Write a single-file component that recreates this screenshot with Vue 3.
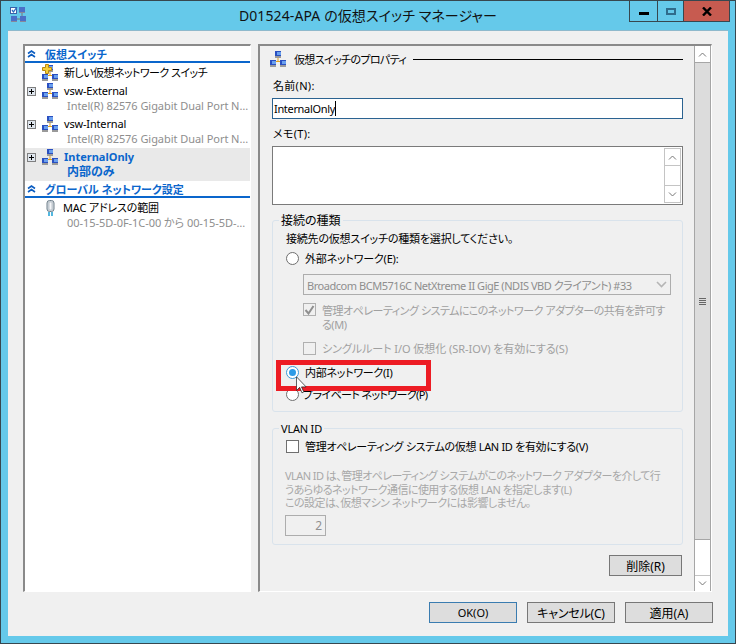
<script setup>
const items = [
  { name: 'vsw-External', sub: 'Intel(R) 82576 Gigabit Dual Port N…' },
  { name: 'vsw-Internal', sub: 'Intel(R) 82576 Gigabit Dual Port N…' },
  { name: 'InternalOnly', sub: '内部のみ', selected: true }
]
</script>

<template>
  <div class="win">
    <svg width="0" height="0" class="defs">
      <symbol id="sw" viewBox="0 0 16 16">
        <path d="M8 6v4M3 10.5h10M3 10v2M13 10v2" stroke="#e0a020" fill="none" />
        <rect x="5" y="0" width="6" height="5" fill="#2a4fc0" />
        <rect x="7" y="1" width="4" height="3" fill="#6aa0ee" />
        <rect x="5" y="5" width="6" height="2" fill="#9a9a9a" />
        <rect x="0" y="9" width="6" height="5" fill="#2a4fc0" />
        <rect x="2" y="10" width="4" height="3" fill="#6aa0ee" />
        <rect x="0" y="14" width="6" height="2" fill="#9a9a9a" />
        <rect x="10" y="9" width="6" height="5" fill="#2a4fc0" />
        <rect x="12" y="10" width="4" height="3" fill="#6aa0ee" />
        <rect x="10" y="14" width="6" height="2" fill="#9a9a9a" />
      </symbol>
      <symbol id="chev" viewBox="0 0 9 8">
        <path d="M1 3.5 4.5 1 8 3.5M1 7 4.5 4.5 8 7" stroke="#0a5cc0" stroke-width="1.6" fill="none" />
      </symbol>
      <symbol id="plus" viewBox="0 0 9 9">
        <rect x="0.5" y="0.5" width="8" height="8" fill="#dfe6ee" stroke="#7f7f7f" />
        <path d="M2 4.5h5M4.5 2v5" stroke="#000" />
      </symbol>
    </svg>

    <header class="title">
      <svg class="title-icon" width="16" height="16" viewBox="0 0 16 16">
        <rect x="0.5" y="0.5" width="6" height="6" fill="#fff" stroke="#3a62a8" />
        <path d="M2 3l1.5 2L7 0" stroke="#2a6cc0" stroke-width="1.3" fill="none" />
        <path d="M12 6v5M3 12h10" stroke="#777" fill="none" />
        <rect x="9" y="0" width="6" height="5" fill="#4a70c8" />
        <rect x="1" y="9" width="6" height="5" fill="#4a70c8" />
        <rect x="10" y="9" width="6" height="5" fill="#4a70c8" />
        <rect x="9" y="5" width="6" height="1" fill="#889" />
        <rect x="1" y="14" width="6" height="1" fill="#889" />
        <rect x="10" y="14" width="6" height="1" fill="#889" />
      </svg>
      <div class="title-text">D01524-APA の仮想スイッチ マネージャー</div>
      <div class="controls">
        <div class="ctl min"><i></i></div>
        <div class="ctl max"><i></i></div>
        <div class="ctl close">
          <svg width="10" height="9" viewBox="0 0 10 9"><path d="M1 0.5 9 8.5M9 0.5 1 8.5" stroke="#000" stroke-width="2.4" /></svg>
        </div>
      </div>
    </header>

    <main class="client">
      <div class="panels">
        <aside class="left">
          <div class="sec">
            <svg class="chev" width="9" height="8"><use href="#chev" /></svg>
            <span>仮想スイッチ</span>
          </div>
          <div class="row new-row">
            <span class="exp"></span>
            <span class="ico-wrap">
              <svg width="16" height="16"><use href="#sw" /></svg>
              <svg class="new-plus" width="10" height="10" viewBox="0 0 10 10"><path d="M3.5 0.5h3v3h3v3h-3v3h-3v-3h-3v-3h3z" fill="#f5cf3a" stroke="#b98a10" /></svg>
            </span>
            <span class="main tight">新しい仮想ネットワーク スイッチ</span>
          </div>
          <div v-for="it in items" :key="it.name" class="item" :class="{ selected: it.selected }">
            <div class="row">
              <span class="exp"><svg width="9" height="9"><use href="#plus" /></svg></span>
              <svg class="ico" width="16" height="16"><use href="#sw" /></svg>
              <span class="main">{{ it.name }}</span>
            </div>
            <div class="sub">{{ it.sub }}</div>
          </div>
          <div class="sec">
            <svg class="chev" width="9" height="8"><use href="#chev" /></svg>
            <span>グローバル ネットワーク設定</span>
          </div>
          <div class="item mac">
            <div class="row">
              <span class="exp mac-exp"></span>
              <svg class="ico mac-ico" width="9" height="16" viewBox="0 0 9 16">
                <rect x="1" y="0.5" width="7" height="11" rx="2.5" fill="#d7dde2" stroke="#6f7f8a" />
                <rect x="3" y="2" width="3" height="8" fill="#f4f6f8" stroke="#9aa6ae" stroke-width="0.6" />
                <path d="M3 12v4M6 12v4" stroke="#2aa6d8" stroke-width="1.6" />
              </svg>
              <span class="main">MAC アドレスの範囲</span>
            </div>
            <div class="sub">00-15-5D-0F-1C-00 から 00-15-5D-…</div>
          </div>
        </aside>

        <section class="right">
          <div class="content">
            <div class="head">
              <svg width="16" height="16"><use href="#sw" /></svg>
              <span>仮想スイッチのプロパティ</span>
              <i></i>
            </div>
            <div class="lbl first">名前(N):</div>
            <div class="input"><span>InternalOnly</span><b></b></div>
            <div class="lbl">メモ(T):</div>
            <div class="memo">
              <div class="memo-bar">
                <div class="mb">
                  <svg width="9" height="5" viewBox="0 0 9 5"><path d="M1 4.5 4.5 1 8 4.5" stroke="#777" fill="none" /></svg>
                </div>
                <div class="mb-track"></div>
                <div class="mb">
                  <svg width="9" height="5" viewBox="0 0 9 5"><path d="M1 .5 4.5 4 8 .5" stroke="#777" fill="none" /></svg>
                </div>
              </div>
            </div>

            <fieldset class="group conn">
              <legend>接続の種類</legend>
              <div class="line desc">接続先の仮想スイッチの種類を選択してください。</div>
              <div class="line ext"><span class="radio"></span>外部ネットワーク(E):</div>
              <div class="select">
                <span>Broadcom BCM5716C NetXtreme II GigE (NDIS VBD クライアント) #33</span>
                <svg width="11" height="7" viewBox="0 0 11 7"><path d="M1 1 5.5 5.5 10 1" stroke="#b5b5b5" stroke-width="1.6" fill="none" /></svg>
              </div>
              <div class="chk-row share">
                <span class="check off">
                  <svg width="11" height="10" viewBox="0 0 11 10"><path d="M1.5 5 4.5 8.5 9.5 1" stroke="#8f8f8f" stroke-width="2" fill="none" /></svg>
                </span>
                <span class="dim wrap">管理オペレーティング システムにこのネットワーク アダプターの共有を許可す<br />る(M)</span>
              </div>
              <div class="chk-row sriov">
                <span class="check off"></span>
                <span class="dim">シングルルート I/O 仮想化 (SR-IOV) を有効にする(S)</span>
              </div>
              <div class="line int"><span class="radio on"><i></i></span>内部ネットワーク(I)</div>
              <div class="line priv"><span class="radio"></span><span class="priv-t">プライベート ネットワーク(P)</span></div>
            </fieldset>

            <fieldset class="group vlan">
              <legend>VLAN ID</legend>
              <div class="line vlan-opt"><span class="check"></span>管理オペレーティング システムの仮想 LAN ID を有効にする(V)</div>
              <div class="help">VLAN ID は、管理オペレーティング システムがこのネットワーク アダプターを介して行<br />うあらゆるネットワーク通信に使用する仮想 LAN を指定します(L)<br />この設定は、仮想マシン ネットワークには影響しません。</div>
              <div class="num">2</div>
            </fieldset>

            <button class="btn del">削除(R)</button>
          </div>

          <div class="scroll">
            <div class="sb">
              <svg width="9" height="5" viewBox="0 0 9 5"><path d="M1 4.5 4.5 1 8 4.5" stroke="#777" fill="none" /></svg>
            </div>
            <div class="thumb"><span></span></div>
            <div class="rest"></div>
            <div class="sb down">
              <svg width="9" height="5" viewBox="0 0 9 5"><path d="M1 .5 4.5 4 8 .5" stroke="#777" fill="none" /></svg>
            </div>
          </div>
        </section>
      </div>

      <footer class="actions">
        <button class="btn def">OK(O)</button>
        <button class="btn cancel">キャンセル(C)</button>
        <button class="btn">適用(A)</button>
      </footer>
    </main>

    <div class="redbox"></div>
    <svg class="cursor" width="11" height="19" viewBox="0 0 12 20">
      <path d="M.5.5v15l3.5-3.5 2.5 6 2-1-2.5-5.5h5z" fill="#fff" stroke="#222" stroke-width="0.8" />
    </svg>
  </div>
</template>

<style>
html, body { margin: 0; background: #fff; }
</style>

<style scoped>
* { box-sizing: border-box; }
.defs { position: absolute; }
.win {
  position: relative;
  width: 736px;
  height: 644px;
  overflow: hidden;
  display: flex;
  flex-direction: column;
  background: #65c9ea;
  border: 1px solid #37474f;
  font-family: "Noto Sans", "Noto Sans CJK JP", sans-serif;
  font-feature-settings: "palt";
  font-size: 11px;
  color: #000;
}
.title {
  height: 29px;
  flex: none;
  display: grid;
  grid-template-columns: 1fr auto 1fr;
}
.title-icon { margin: 6px 0 0 9px; }
.title-text { font-size: 14px; letter-spacing: 0.1px; line-height: 30px; color: #111; }
.controls { display: flex; justify-content: flex-end; align-items: flex-start; margin-right: 5px; }
.ctl {
  height: 21px;
  border: 1px solid #37474f;
  border-top: 0;
  display: flex;
  align-items: center;
  justify-content: center;
}
.min { width: 28px; border-right: 0; }
.min i { width: 10px; height: 3px; background: #000; margin-top: 5px; }
.max { width: 26px; border-right: 0; }
.max i { width: 10px; height: 7px; border: 2px solid #2f6c8c; }
.close { width: 47px; background: #c75b50; }
.client {
  flex: 1;
  margin: 0 7px 7px;
  background: #f0f0f0;
  border-top: 1px solid #8fb9cc;
  padding: 13px 15px 0;
  display: flex;
  flex-direction: column;
}
.panels { display: flex; gap: 7px; height: 548px; flex: none; }
.left {
  width: 228px;
  background: #fff;
  border-top: 2px solid #8a8a8a;
  border-left: 2px solid #8a8a8a;
  border-right: 1px solid #fff;
  border-bottom: 1px solid #fff;
}
.sec {
  height: 17px;
  display: flex;
  align-items: center;
  border-bottom: 2px solid #0a66cc;
  padding-left: 2px;
  color: #0a66cc;
  font-weight: 700;
}
.chev { margin-right: 9px; }
.row { display: flex; align-items: center; height: 16px; }
.new-row { height: 19px; }
.exp { width: 17px; padding-left: 2px; display: flex; align-items: center; flex: none; }
.ico { flex: none; }
.ico-wrap { position: relative; width: 16px; height: 16px; flex: none; }
.new-plus { position: absolute; left: 0; top: -1px; }
.main { margin: -2px 0 0 6px; white-space: nowrap; letter-spacing: -0.17px; }
.main.tight { letter-spacing: -0.56px; }
.item { height: 33px; padding-top: 1px; }
.sub { margin: -1px 0 0 42px; height: 16px; line-height: 16px; color: #8e8e8e; white-space: nowrap; letter-spacing: -0.05px; }
.selected { background: #e9e9e9; }
.selected .main { color: #0a66cc; font-weight: 700; letter-spacing: 0; }
.selected .sub { color: #0a66cc; font-weight: 700; font-size: 12px; letter-spacing: 0; }
.mac .row { height: 18px; }
.mac .sub { margin-top: -2px; }
.mac-exp { width: 21px; }
.mac-ico { margin-right: 2px; }
.right {
  width: 454px;
  display: flex;
  background: #f0f0f0;
  border-top: 2px solid #8a8a8a;
  border-left: 2px solid #8a8a8a;
  border-right: 1px solid #fff;
  border-bottom: 1px solid #fff;
}
.content {
  width: 434px;
  padding: 0 11px 0 12px;
  display: flex;
  flex-direction: column;
}
.head {
  margin: 5px 0 0 -2px;
  height: 16px;
  display: flex;
  align-items: center;
}
.head span { margin-left: 8px; white-space: nowrap; letter-spacing: -0.65px; }
.head i { flex: 1; height: 1px; background: #000; margin-left: 7px; }
.lbl { height: 16px; line-height: 18px; margin: 6px 0 0 1px; letter-spacing: 0.3px; }
.lbl.first { margin-top: 10px; }
.input {
  margin-top: 5px;
  height: 21px;
  border: 1px solid #2b6391;
  background: #fff;
  padding-left: 1px;
  line-height: 19px;
  display: flex;
  align-items: center;
  letter-spacing: -0.33px;
}
.input b { width: 1px; height: 15px; background: #000; }
.memo {
  margin-top: 5px;
  height: 59px;
  border: 1px solid #7a7a7a;
  background: #fff;
  padding: 1px;
  display: flex;
  justify-content: flex-end;
}
.memo-bar {
  width: 17px;
  border: 1px solid #c4c4c4;
  display: flex;
  flex-direction: column;
}
.mb { height: 16px; display: flex; align-items: center; justify-content: center; }
.mb-track { flex: 1; border: solid #c4c4c4; border-width: 1px 0; }
.group {
  margin: 0;
  border: 1px solid #d9e3ec;
  border-radius: 3px;
  padding: 0 0 0 13px;
  min-width: 0;
}
.group legend {
  margin-left: -7px;
  padding: 0 2px;
  height: 16px;
  line-height: 18px;
  font-size: 12px;
}
.vlan legend { font-size: 11px; letter-spacing: -0.2px; }
.conn { margin-top: 7px; height: 200px; }
.vlan { margin-top: 8px; height: 125px; }
.line {
  height: 16px;
  padding-top: 2px;
  line-height: 16px;
  display: flex;
  align-items: center;
  white-space: nowrap;
}
.desc { margin-top: 2px; letter-spacing: -0.2px; }
.radio {
  width: 13px;
  height: 13px;
  flex: none;
  border: 1px solid #6f6f6f;
  border-radius: 50%;
  background: #fff;
  margin: -2px 6px 0 0;
  display: flex;
  align-items: center;
  justify-content: center;
}
.radio.on { border-color: #3a9ad9; }
.radio i { width: 7px; height: 7px; border-radius: 50%; background: #2d9be6; }
.ext { margin-top: 4px; letter-spacing: -0.2px; }
.select {
  margin: 8px 0 0 17px;
  width: 368px;
  height: 21px;
  border: 1px solid #adadad;
  padding: 0 3px;
  display: flex;
  align-items: center;
  justify-content: space-between;
  color: #8e8e8e;
  white-space: nowrap;
  letter-spacing: -0.46px;
}
.chk-row { display: flex; margin-left: 17px; color: #a0a0a0; white-space: nowrap; }
.dim { line-height: 13.5px; }
.share { margin-top: 8px; height: 37px; }
.share .dim { padding-top: 1px; letter-spacing: -0.5px; }
.sriov { height: 16px; align-items: center; }
.sriov .dim { letter-spacing: -0.05px; padding-top: 1px; }
.check {
  width: 13px;
  height: 13px;
  flex: none;
  border: 1px solid #6f6f6f;
  background: #fff;
  margin-right: 6px;
  display: flex;
  align-items: center;
  justify-content: center;
}
.line .check { margin-top: -2px; }
.check.off { border-color: #b0b0b0; background: #f0f0f0; }
.int { margin-top: 8px; letter-spacing: -0.27px; }
.priv { margin-top: 6px; }
.priv-t { margin-left: -2px; letter-spacing: -0.6px; }
.vlan-opt { margin-top: 2px; letter-spacing: -0.32px; }
.help {
  margin: 15px 0 0 -1px;
  height: 41px;
  line-height: 13.5px;
  color: #a8a8a8;
  white-space: nowrap;
  letter-spacing: -0.55px;
}
.num {
  margin: 5px 0 0 -1px;
  width: 41px;
  height: 21px;
  border: 1px solid #adadad;
  color: #909090;
  font-size: 12px;
  text-align: right;
  padding-right: 3px;
  line-height: 19px;
}
.btn {
  font: inherit;
  font-size: 12px;
  font-feature-settings: inherit;
  color: #000;
  background: #dddddd;
  border: 1px solid #777;
  padding: 0;
  width: 88px;
  height: 21px;
}
.del { width: 73px; margin: 10px 1px 0 0; align-self: flex-end; flex: none; }
.cancel { letter-spacing: -0.2px; }
.scroll {
  width: 17px;
  display: flex;
  flex-direction: column;
  border-left: 1px solid #a6a6a6;
  border-right: 1px solid #a6a6a6;
  background: #fff;
}
.sb { height: 16px; background: #fff; display: flex; align-items: center; justify-content: center; flex: none; }
.down { border-top: 1px solid #c4c4c4; }
.thumb {
  height: 478px;
  background: #dcdcdc;
  border-top: 1px solid #a6a6a6;
  border-bottom: 1px solid #a6a6a6;
  display: flex;
  align-items: center;
  justify-content: center;
}
.thumb span {
  width: 7px;
  height: 7px;
  border-top: 1px solid #666;
  border-bottom: 1px solid #666;
  background: linear-gradient(#dcdcdc 0 1px, #666 1px 2px, #dcdcdc 2px 3px, #666 3px 4px, #dcdcdc 4px);
}
.rest { flex: 1; }
.actions {
  margin-top: 10px;
  display: flex;
  justify-content: flex-end;
  gap: 10px;
}
.def { border-color: #3a7cb0; font-size: 11px; }
.redbox {
  position: absolute;
  left: 275px;
  top: 359px;
  width: 155px;
  height: 31px;
  border: 5px solid #ed1c24;
}
.cursor { position: absolute; left: 295px; top: 375px; }
</style>
